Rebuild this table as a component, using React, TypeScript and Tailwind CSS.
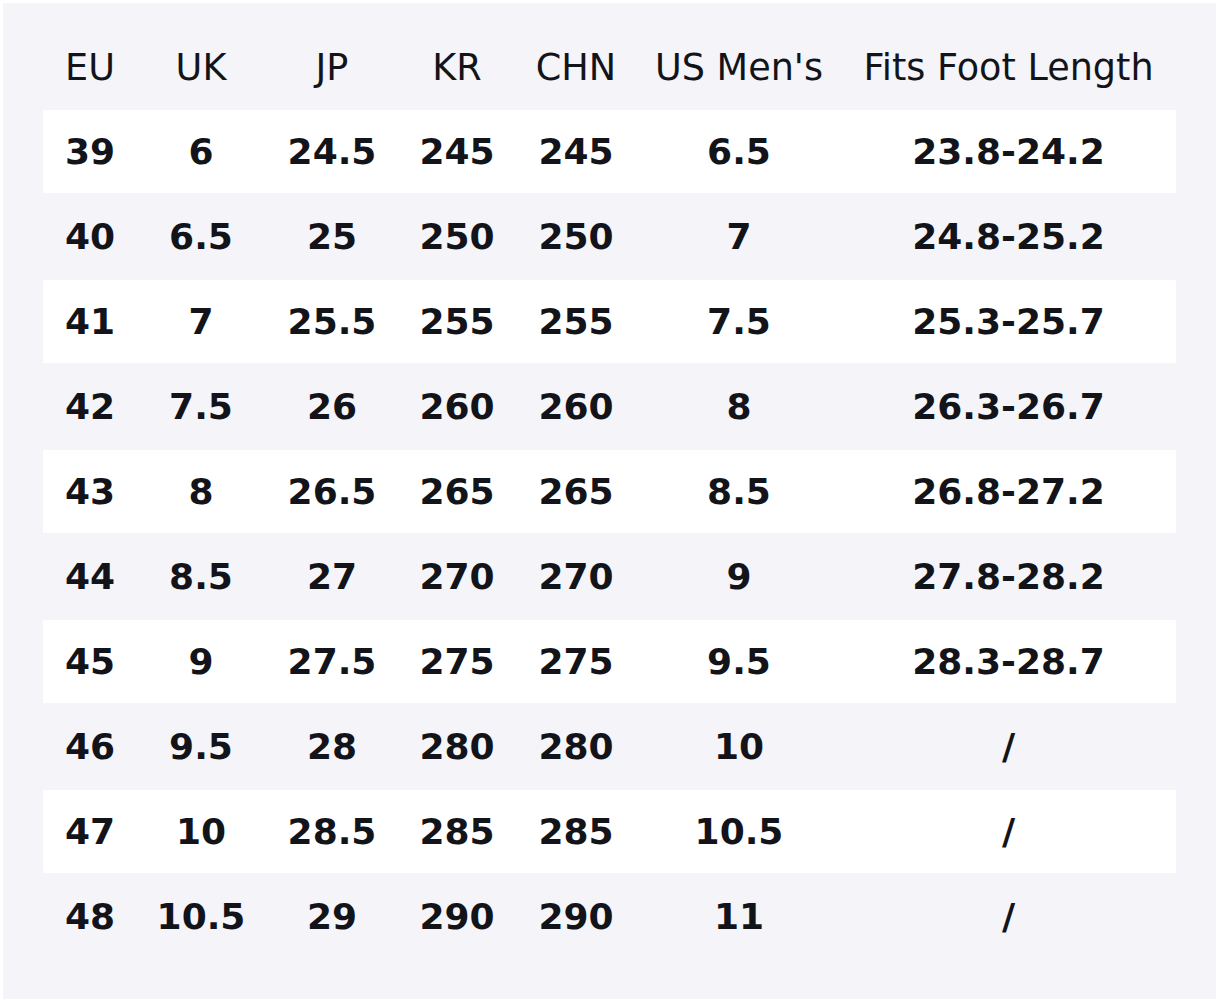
import React from "react";

const headers = ["EU", "UK", "JP", "KR", "CHN", "US Men's", "Fits Foot Length"];

const rows: string[][] = [
  ["39", "6", "24.5", "245", "245", "6.5", "23.8-24.2"],
  ["40", "6.5", "25", "250", "250", "7", "24.8-25.2"],
  ["41", "7", "25.5", "255", "255", "7.5", "25.3-25.7"],
  ["42", "7.5", "26", "260", "260", "8", "26.3-26.7"],
  ["43", "8", "26.5", "265", "265", "8.5", "26.8-27.2"],
  ["44", "8.5", "27", "270", "270", "9", "27.8-28.2"],
  ["45", "9", "27.5", "275", "275", "9.5", "28.3-28.7"],
  ["46", "9.5", "28", "280", "280", "10", "/"],
  ["47", "10", "28.5", "285", "285", "10.5", "/"],
  ["48", "10.5", "29", "290", "290", "11", "/"],
];

const gridCols = "grid grid-cols-[94px_128px_134px_116px_122px_204px_1fr]";

export default function App() {
  return (
    <div className="bg-white p-[3px] min-h-[1003px]">
      <div
        className="bg-[#f4f4f9] h-[996px] px-[40px] pt-[20px] pb-[39px] text-[#131419]"
        style={{ fontFamily: '"DejaVu Sans", Verdana, sans-serif' }}
      >
        <div className={`${gridCols} h-[87px] items-center text-[36.6px]`}>
          {headers.map((h) => (
            <div key={h} className="text-center whitespace-nowrap font-normal pt-[3px]">
              {h}
            </div>
          ))}
        </div>
        {rows.map((r, i) => (
          <div
            key={i}
            className={`${gridCols} items-center text-[36px] ${
              i % 2 === 0 ? "bg-white h-[83px]" : "h-[87px]"
            }`}
          >
            {r.map((c, j) => (
              <div key={j} className="text-center whitespace-nowrap font-bold pt-[1px]">
                {c}
              </div>
            ))}
          </div>
        ))}
      </div>
    </div>
  );
}
